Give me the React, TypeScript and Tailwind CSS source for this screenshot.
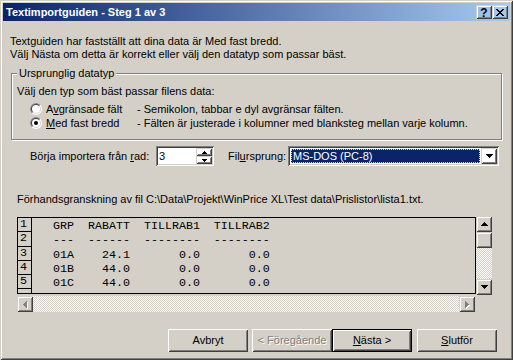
import React from "react";

const raised =
  "shadow-[inset_1px_1px_#fff,inset_-1px_-1px_#404040,inset_2px_2px_#d4d0c8,inset_-2px_-2px_#808080]";
const defRaised =
  "shadow-[inset_0_0_0_1px_#000,inset_2px_2px_#fff,inset_-2px_-2px_#404040,inset_3px_3px_#d4d0c8,inset_-3px_-3px_#808080]";
const sbBtn =
  "shadow-[inset_1px_1px_#d4d0c8,inset_-1px_-1px_#404040,inset_2px_2px_#fff,inset_-2px_-2px_#808080]";
const sunken =
  "shadow-[inset_1px_1px_#808080,inset_-1px_-1px_#fff,inset_2px_2px_#404040,inset_-2px_-2px_#d4d0c8]";
const dither =
  "bg-[image:repeating-conic-gradient(#d4d0c8_0_25%,#fff_0_50%)] bg-[length:2px_2px]";

type Dir = "up" | "down" | "left" | "right";

function Arrow({ dir, n, color = "#000" }: { dir: Dir; n: number; color?: string }) {
  const w = 2 * n - 1;
  const vert = dir === "up" || dir === "down";
  const rects = [];
  for (let i = 0; i < n; i++) {
    const len = 2 * i + 1;
    const off = n - 1 - i;
    if (dir === "up") rects.push(<rect key={i} x={off} y={i} width={len} height={1} />);
    if (dir === "down") rects.push(<rect key={i} x={off} y={n - 1 - i} width={len} height={1} />);
    if (dir === "left") rects.push(<rect key={i} x={i} y={off} width={1} height={len} />);
    if (dir === "right") rects.push(<rect key={i} x={n - 1 - i} y={off} width={1} height={len} />);
  }
  return (
    <svg width={vert ? w : n} height={vert ? n : w} fill={color} shapeRendering="crispEdges">
      {rects}
    </svg>
  );
}

function CloseGlyph() {
  const rows: [number, number][][] = [
    [[0, 2], [6, 2]],
    [[1, 2], [5, 2]],
    [[2, 4]],
    [[3, 2]],
    [[2, 4]],
    [[1, 2], [5, 2]],
    [[0, 2], [6, 2]],
  ];
  return (
    <svg width={8} height={7} fill="#000" shapeRendering="crispEdges">
      {rows.map((r, y) => r.map(([x, w], k) => <rect key={`${y}-${k}`} x={x} y={y} width={w} height={1} />))}
    </svg>
  );
}

function Radio({ checked }: { checked?: boolean }) {
  return (
    <svg width={12} height={12} className="shrink-0">
      <circle cx={6} cy={6} r={6} fill="#fff" />
      <path d="M1.757 10.243 A6 6 0 0 1 10.243 1.757 Z" fill="#808080" />
      <circle cx={6} cy={6} r={5} fill="#d4d0c8" />
      <path d="M2.464 9.536 A5 5 0 0 1 9.536 2.464 Z" fill="#404040" />
      <circle cx={6} cy={6} r={4} fill="#fff" />
      {checked && <circle cx={6} cy={6} r={2} fill="#000" />}
    </svg>
  );
}

function Btn({ children, def, disabled }: { children: React.ReactNode; def?: boolean; disabled?: boolean }) {
  return (
    <div
      className={`w-[80px] h-[23px] flex items-center justify-center ${def ? defRaised : raised} ${
        disabled ? "text-[#808080] [text-shadow:1px_1px_0_#fff]" : ""
      }`}
    >
      {children}
    </div>
  );
}

const lines = [
  "   GRP  RABATT  TILLRAB1  TILLRAB2",
  "   ---  ------  --------  --------",
  "   01A    24.1       0.0       0.0",
  "   01B    44.0       0.0       0.0",
  "   01C    44.0       0.0       0.0",
];

export default function App() {
  return (
    <div className="w-[513px] h-[360px] bg-[#d4d0c8] flex flex-col overflow-hidden font-['Liberation_Sans',Arial,sans-serif] text-[11px] text-black shadow-[inset_1px_1px_#d4d0c8,inset_-1px_-1px_#404040,inset_2px_2px_#fff,inset_-2px_-2px_#808080]">
      {/* title bar */}
      <div className="mx-[3px] mt-[3px] h-[18px] flex items-center bg-[linear-gradient(to_right,#0a246a,#a6caf0)]">
        <span className="pl-[3px] text-white font-bold leading-[18px]">Textimportguiden - Steg 1 av 3</span>
        <div className="ml-auto mr-[2px] flex">
          <div className={`w-[16px] h-[14px] flex items-center justify-center ${sbBtn}`}>
            <span className="font-bold text-[12px] leading-none pt-[1px]">?</span>
          </div>
          <div className={`w-[16px] h-[14px] flex items-center justify-center ${sbBtn}`}>
            <CloseGlyph />
          </div>
        </div>
      </div>

      <div className="mt-[14px] ml-[10px] leading-[13px]">
        <div>Textguiden har fastställt att dina data är Med fast bredd.</div>
        <div>Välj Nästa om detta är korrekt eller välj den datatyp som passar bäst.</div>
      </div>

      {/* group box */}
      <div className="mt-[12px] ml-[11px] w-[491px] h-[67px] relative border border-[#808080] shadow-[inset_1px_1px_#fff,1px_1px_#fff]">
        <span className="absolute left-[5px] top-[-7px] px-[2px] bg-[#d4d0c8] leading-[13px]">Ursprunglig datatyp</span>
        <div className="pt-[11px] pl-[5px]">
          <div className="leading-[13px]">Välj den typ som bäst passar filens data:</div>
          <div className="mt-[4px] ml-[13px] h-[14px] flex items-center">
            <Radio />
            <span className="ml-[4px] w-[91px]">
              A<span className="underline">v</span>gränsade fält
            </span>
            <span>- Semikolon, tabbar e dyl avgränsar fälten.</span>
          </div>
          <div className="ml-[13px] h-[14px] flex items-center">
            <Radio checked />
            <span className="ml-[4px] w-[91px]">
              <span className="underline">M</span>ed fast bredd
            </span>
            <span>- Fälten är justerade i kolumner med blanksteg mellan varje kolumn.</span>
          </div>
        </div>
      </div>

      {/* start row / origin */}
      <div className="mt-[6px] h-[20px] flex items-center">
        <span className="ml-[30px] w-[126px]">
          Börja importera från <span className="underline">r</span>ad:
        </span>
        <div className={`w-[58px] h-[20px] bg-white flex items-center ${sunken}`}>
          <span className="pl-[3px] flex-1">3</span>
          <div className="mr-[2px] flex flex-col">
            <div className={`w-[16px] h-[8px] flex items-center justify-center ${sbBtn}`}>
              <Arrow dir="up" n={3} />
            </div>
            <div className={`w-[16px] h-[8px] flex items-center justify-center ${sbBtn}`}>
              <Arrow dir="down" n={3} />
            </div>
          </div>
        </div>
        <span className="ml-[14px] w-[60px]">
          Fil<span className="underline">u</span>rsprung:
        </span>
        <div className={`w-[211px] h-[20px] bg-white flex items-center p-[2px] ${sunken}`}>
          <div className="flex-1 h-[16px] p-[1px] bg-white">
            <div className="h-full bg-[#0a246a] border border-dotted border-[#f5db95] text-white leading-[12px] pl-[1px]">
              MS-DOS (PC-8)
            </div>
          </div>
          <div className={`w-[16px] h-[16px] flex items-center justify-center ${sbBtn}`}>
            <Arrow dir="down" n={4} />
          </div>
        </div>
      </div>

      <div className="mt-[27px] ml-[17px] leading-[13px]">
        Förhandsgranskning av fil C:\Data\Projekt\WinPrice XL\Test data\Prislistor\lista1.txt.
      </div>

      {/* preview */}
      <div className="mt-[11px] ml-[17px] flex items-start">
        <div className="w-[459px] h-[77px] border border-black flex overflow-hidden font-['Liberation_Mono','Courier_New',monospace] text-[11.67px]">
          <div className="w-[14px] border-r border-black shrink-0">
            {[1, 2, 3, 4, 5, 0].map((n) => (
              <div key={n} className="h-[14.25px] border-b border-black leading-[13px] pl-[2px]">
                {n > 0 ? n : ""}
              </div>
            ))}
          </div>
          <div className="pt-[1px]">
            {lines.map((l, i) => (
              <div key={i} className="h-[14.25px] leading-[14px] whitespace-pre">
                {l}
              </div>
            ))}
          </div>
        </div>
        <div className="w-[16px] h-[79px] -mt-[1px] flex flex-col">
          <div className={`h-[16px] flex items-center justify-center ${sbBtn}`}>
            <Arrow dir="up" n={4} />
          </div>
          <div className={`h-[16px] ${sbBtn}`} />
          <div className={`flex-1 ${dither}`} />
          <div className={`h-[16px] flex items-center justify-center ${sbBtn}`}>
            <Arrow dir="down" n={4} />
          </div>
        </div>
      </div>
      <div className="mt-[1px] ml-[17px] w-[458px] h-[16px] flex">
        <div className={`w-[16px] h-[16px] flex items-center justify-center ${sbBtn}`}>
          <span className="relative">
            <span className="absolute left-[1px] top-[1px]">
              <Arrow dir="left" n={4} color="#fff" />
            </span>
            <span className="relative block">
              <Arrow dir="left" n={4} color="#808080" />
            </span>
          </span>
        </div>
        <div className={`flex-1 ${dither}`} />
        <div className={`w-[16px] h-[16px] flex items-center justify-center ${sbBtn}`}>
          <span className="relative">
            <span className="absolute left-[1px] top-[1px]">
              <Arrow dir="right" n={4} color="#fff" />
            </span>
            <span className="relative block">
              <Arrow dir="right" n={4} color="#808080" />
            </span>
          </span>
        </div>
      </div>

      {/* buttons */}
      <div className="mt-[17px] ml-[168px] flex">
        <Btn>Avbryt</Btn>
        <div className="ml-[4px] flex">
          <Btn disabled>&lt; Föregående</Btn>
          <Btn def>
            <span>
              <span className="underline">N</span>ästa &gt;
            </span>
          </Btn>
        </div>
        <div className="ml-[5px]">
          <Btn>
            <span>
              <span className="underline">S</span>lutför
            </span>
          </Btn>
        </div>
      </div>
    </div>
  );
}
